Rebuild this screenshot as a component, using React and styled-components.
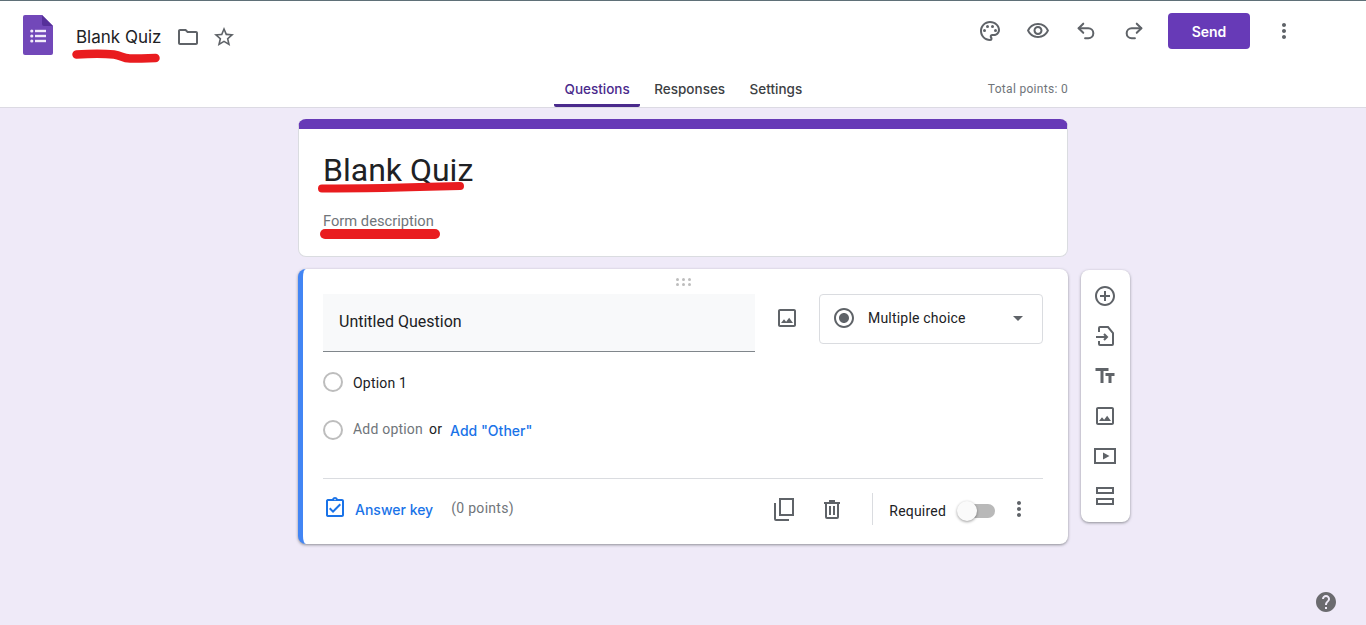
import styled, { createGlobalStyle } from "styled-components";
import {
  MdOutlineFolder,
  MdStarBorder,
  MdOutlinePalette,
  MdOutlineVisibility,
  MdMoreVert,
  MdOutlineImage,
  MdRadioButtonChecked,
  MdArrowDropDown,
  MdOutlineAssignmentTurnedIn,
  MdAddCircleOutline,
  MdTextFields,
  MdHelp,
} from "react-icons/md";
import { Undo2, Redo2 } from "lucide-react";

const GlobalStyle = createGlobalStyle`
  html, body {
    margin: 0;
    padding: 0;
    background: #efeaf8;
    font-family: Roboto, "Liberation Sans", sans-serif;
    color: #202124;
  }
  body {
    min-height: 625px;
    overflow: hidden;
  }
`;

const Header = styled.header`
  position: relative;
  height: 106px;
  background: #fff;
  border-top: 1px solid #5f7078;
  border-bottom: 1px solid #dcdae3;
`;

const TopRow = styled.div`
  display: flex;
  justify-content: space-between;
  height: 72px;
  padding: 0 58px 0 23px;
`;

const TitleGroup = styled.div`
  display: flex;
  align-items: center;
`;

const LogoMark = styled.svg`
  margin-top: -4px;
`;

const DocTitle = styled.span`
  margin-left: 23px;
  font-family: Inter, Roboto, sans-serif;
  font-size: 17px;
`;

const TitleIcons = styled.div`
  display: flex;
  align-items: center;
  gap: 12px;
  margin-left: 14px;
  color: #5f6368;
  font-size: 24px;
`;

const Actions = styled.div`
  display: flex;
  align-items: center;
  height: 60px;
  color: #5f6368;
`;

const ActionButton = styled.div`
  display: flex;
  align-items: center;
  justify-content: center;
  width: 48px;
  height: 48px;
`;

const SendButton = styled.button`
  width: 82px;
  height: 36px;
  margin: 0 10px;
  border: none;
  border-radius: 4px;
  background: #673ab7;
  color: #fff;
  font-family: Inter, Roboto, sans-serif;
  font-size: 14px;
  font-weight: 600;
`;

const TabRow = styled.div`
  display: flex;
  align-items: center;
  justify-content: space-between;
  width: 770px;
  height: 34px;
  margin: 0 auto;
  padding-left: 256px;
  box-sizing: border-box;
`;

const Tabs = styled.nav`
  display: flex;
  gap: 3.5px;
  height: 100%;
`;

const Tab = styled.div`
  display: flex;
  align-items: center;
  padding: 0 10.5px;
  font-family: Inter, Roboto, sans-serif;
  font-size: 13.5px;
  font-weight: 500;
  color: ${({ $active }) => ($active ? "#4a2a8c" : "#3c4043")};
  border-bottom: 3px solid ${({ $active }) => ($active ? "#4a2a8c" : "transparent")};
  border-radius: 0 0 2px 2px;
  box-sizing: border-box;
`;

const TotalPoints = styled.span`
  margin-bottom: 3px;
  font-size: 12px;
  letter-spacing: 0.3px;
  color: #70757a;
`;

const Main = styled.main`
  display: grid;
  grid-template-columns: 1fr 770px 1fr;
  row-gap: 12px;
  padding-top: 11px;
`;

const TitleCard = styled.section`
  grid-column: 2;
  position: relative;
  height: 138px;
  padding: 33px 25px 0;
  box-sizing: border-box;
  background: #fff;
  border: 1px solid #dadce0;
  border-top: 10px solid #673ab7;
  border-radius: 8px;
`;

const QuizTitle = styled.h1`
  margin: -12px 0 0 -1px;
  font-size: 32px;
  font-weight: 400;
  line-height: 40px;
`;

const Description = styled.p`
  margin: 22px 0 0 -1px;
  font-size: 14.7px;
  line-height: 18px;
  color: #70757a;
`;

const QuestionCard = styled.section`
  grid-column: 2;
  display: flex;
  flex-direction: column;
  height: 275px;
  padding: 0 25px 0 20px;
  box-sizing: border-box;
  background: #fff;
  border-left: 5px solid #4285f4;
  border-radius: 8px;
  box-shadow: 0 1px 3px rgba(60, 64, 67, 0.55);
`;

const DragHandle = styled.div`
  display: grid;
  grid-template-columns: repeat(3, 3px);
  grid-auto-rows: 3px;
  column-gap: 3px;
  row-gap: 2px;
  justify-content: center;
  align-content: start;
  height: 25px;
  padding-top: 9px;
  box-sizing: border-box;
`;

const Dot = styled.i`
  width: 3px;
  height: 3px;
  border-radius: 50%;
  background: #bdbdbd;
`;

const QuestionRow = styled.div`
  display: flex;
  align-items: flex-start;
  margin-bottom: 6px;
`;

const QuestionInput = styled.div`
  display: flex;
  align-items: center;
  width: 432px;
  height: 58px;
  padding: 0 0 2px 16px;
  box-sizing: border-box;
  background: #f8f9fa;
  border-bottom: 1px solid #80868b;
  font-size: 16px;
`;

const ImageButton = styled.div`
  display: flex;
  align-items: center;
  justify-content: center;
  width: 64px;
  height: 48px;
  color: #5f6368;
  font-size: 24px;
`;

const TypeSelect = styled.div`
  display: flex;
  align-items: center;
  width: 224px;
  height: 50px;
  padding: 0 12px 2px;
  box-sizing: border-box;
  border: 1px solid #dadce0;
  border-radius: 4px;
  font-size: 14px;
  color: #5f6368;
`;

const TypeLabel = styled.span`
  flex: 1;
  margin-left: 12px;
  letter-spacing: 0.2px;
  color: #202124;
`;

const OptionRow = styled.div`
  display: flex;
  align-items: center;
  height: 48px;
  font-size: 14px;
  letter-spacing: 0.2px;
`;

const Radio = styled.span`
  width: 20px;
  height: 20px;
  margin-right: 10px;
  box-sizing: border-box;
  border: 2px solid #bdbdbd;
  border-radius: 50%;
`;

const OptionLabel = styled.span`
  margin-top: 2px;
`;

const AddOption = styled.span`
  margin-bottom: 2px;
  color: #70757a;
`;

const OrText = styled.span`
  margin: 0 8px 2px 6px;
`;

const LinkText = styled.span`
  font-family: Inter, Roboto, sans-serif;
  font-size: 14px;
  font-weight: 500;
  letter-spacing: 0;
  color: #1a73e8;
`;

const Footer = styled.div`
  display: flex;
  align-items: center;
  margin-top: 24px;
  height: 61px;
  box-sizing: border-box;
  border-top: 1px solid #dadce0;
`;

const AnswerKey = styled.div`
  display: flex;
  align-items: center;
  gap: 8px;
  color: #1a73e8;
  font-size: 24px;
  svg {
    margin-bottom: 2px;
  }
`;

const Points = styled.span`
  margin: 0 0 2px 18px;
  font-size: 14px;
  letter-spacing: 0.3px;
  color: #70757a;
`;

const FooterTools = styled.div`
  display: flex;
  align-items: center;
  margin-left: auto;
  color: #5f6368;
`;

const TrashSvg = styled.svg`
  margin-left: 30px;
`;

const VDivider = styled.span`
  width: 1px;
  height: 32px;
  margin-left: 32px;
  background: #dadce0;
`;

const RequiredLabel = styled.span`
  margin: 4px 0 0 16px;
  font-size: 14px;
  letter-spacing: 0.2px;
  color: #202124;
`;

const Toggle = styled.span`
  position: relative;
  display: block;
  width: 34px;
  height: 14px;
  margin: 4px 0 0 15px;
  border-radius: 7px;
  background: #b9b9b9;
`;

const Knob = styled.span`
  position: absolute;
  left: -4px;
  top: -3px;
  width: 20px;
  height: 20px;
  border-radius: 50%;
  background: #fafafa;
  box-shadow: 0 1px 3px rgba(0, 0, 0, 0.4);
`;

const MoreButton = styled.div`
  display: flex;
  margin: 0 12px;
  font-size: 24px;
`;

const SideColumn = styled.div`
  grid-column: 3;
  padding-left: 13px;
`;

const SideToolbar = styled.aside`
  display: flex;
  flex-direction: column;
  width: 49px;
  padding: 6px 1px 6px 0;
  margin-top: 1px;
  box-sizing: border-box;
  background: #fff;
  border-radius: 8px;
  box-shadow: 0 1px 3px rgba(60, 64, 67, 0.55);
`;

const SideButton = styled.div`
  display: flex;
  align-items: center;
  justify-content: center;
  height: 40px;
  color: #5f6368;
  font-size: 24px;
`;

const HelpButton = styled.div`
  position: fixed;
  right: 28px;
  bottom: 11px;
  display: flex;
  color: #6b6b6f;
  font-size: 24px;
`;

const Scribble = styled.svg`
  position: absolute;
  left: ${({ $x }) => $x}px;
  top: ${({ $y }) => $y}px;
  pointer-events: none;
`;

const RedLine = ({ x, y, w, h, d, sw }) => (
  <Scribble $x={x} $y={y} width={w} height={h} viewBox={`0 0 ${w} ${h}`}>
    <path d={d} fill="none" stroke="#e91c1f" strokeWidth={sw} strokeLinecap="round" strokeLinejoin="round" />
  </Scribble>
);

const FormsLogo = () => (
  <LogoMark width="30" height="40" viewBox="0 0 30 40">
    <path d="M2 0h17l11 11v27a2 2 0 0 1-2 2H2a2 2 0 0 1-2-2V2a2 2 0 0 1 2-2z" fill="#7248b9" />
    <path d="M19 0l11 11H21a2 2 0 0 1-2-2z" fill="#56309a" />
    <g fill="#f1ebfa">
      <circle cx="8.8" cy="16" r="1.6" />
      <circle cx="8.8" cy="21" r="1.6" />
      <circle cx="8.8" cy="26" r="1.6" />
      <rect x="12" y="14.8" width="11" height="2.4" />
      <rect x="12" y="19.8" width="11" height="2.4" />
      <rect x="12" y="24.8" width="11" height="2.4" />
    </g>
  </LogoMark>
);

const ImportIcon = () => (
  <svg width="24" height="24" viewBox="0 0 24 24" fill="none" stroke="currentColor" strokeWidth="2">
    <path d="M6 8V4a1 1 0 0 1 1-1h8l5 6v11a1 1 0 0 1-1 1H7a1 1 0 0 1-1-1v-3" />
    <path d="M3 13h11M11 10l3 3-3 3" />
  </svg>
);

const VideoIcon = () => (
  <svg width="24" height="24" viewBox="0 0 24 24" fill="none" stroke="currentColor" strokeWidth="2">
    <rect x="2" y="5" width="20" height="14" />
    <path d="M10 8.5L16.5 12L10 15.5z" fill="currentColor" stroke="none" />
  </svg>
);

const SectionIcon = () => (
  <svg width="24" height="24" viewBox="0 0 24 24" fill="none" stroke="currentColor" strokeWidth="2">
    <rect x="4" y="4" width="16" height="5" />
    <rect x="4" y="15" width="16" height="5" />
  </svg>
);

const CopyIcon = () => (
  <svg width="20" height="23" viewBox="0 0 20 23" fill="none" stroke="currentColor" strokeWidth="2">
    <rect x="6" y="1" width="13" height="16" />
    <path d="M1 5V21a1 1 0 0 0 1 1H15" />
  </svg>
);

const TrashIcon = () => (
  <TrashSvg width="16" height="19" viewBox="0 0 16 19" fill="none" stroke="currentColor" strokeWidth="2">
    <path d="M0 3h16M5 1h6" />
    <path d="M2 3v14a1 1 0 0 0 1 1h10a1 1 0 0 0 1-1V3" />
    <path d="M6 6v9M10 6v9" />
  </TrashSvg>
);

export default function App() {
  return (
    <>
      <GlobalStyle />
      <Header>
        <TopRow>
          <TitleGroup>
            <FormsLogo />
            <DocTitle>Blank Quiz</DocTitle>
            <TitleIcons>
              <MdOutlineFolder />
              <MdStarBorder />
            </TitleIcons>
          </TitleGroup>
          <Actions>
            <ActionButton><MdOutlinePalette size={24} /></ActionButton>
            <ActionButton><MdOutlineVisibility size={24} /></ActionButton>
            <ActionButton><Undo2 size={22} strokeWidth={2.2} /></ActionButton>
            <ActionButton><Redo2 size={22} strokeWidth={2.2} /></ActionButton>
            <SendButton>Send</SendButton>
            <ActionButton><MdMoreVert size={24} /></ActionButton>
          </Actions>
        </TopRow>
        <TabRow>
          <Tabs>
            <Tab $active>Questions</Tab>
            <Tab>Responses</Tab>
            <Tab>Settings</Tab>
          </Tabs>
          <TotalPoints>Total points: 0</TotalPoints>
        </TabRow>
        <RedLine x={70} y={46} w={94} h={20} sw={8.5} d="M6.5 7.5C20 6.5 35 6.5 44 7.5C52 8.5 52 11.5 60 11.5C70 12 80 11 85.5 11" />
      </Header>
      <Main>
        <TitleCard>
          <QuizTitle>Blank Quiz</QuizTitle>
          <Description>Form description</Description>
          <RedLine x={17} y={48} w={155} h={20} sw={8} d="M6 11.5C50 11.5 110 10 144 9" />
          <RedLine x={17} y={95} w={130} h={20} sw={10} d="M9 10C40 10 90 10 119 10" />
        </TitleCard>
        <QuestionCard>
          <DragHandle>
            {[0, 1, 2, 3, 4, 5].map((i) => (
              <Dot key={i} />
            ))}
          </DragHandle>
          <QuestionRow>
            <QuestionInput>Untitled Question</QuestionInput>
            <ImageButton><MdOutlineImage /></ImageButton>
            <TypeSelect>
              <MdRadioButtonChecked size={24} />
              <TypeLabel>Multiple choice</TypeLabel>
              <MdArrowDropDown size={24} />
            </TypeSelect>
          </QuestionRow>
          <OptionRow>
            <Radio />
            <OptionLabel>Option 1</OptionLabel>
          </OptionRow>
          <OptionRow>
            <Radio />
            <AddOption>Add option</AddOption>
            <OrText>or</OrText>
            <LinkText>Add "Other"</LinkText>
          </OptionRow>
          <Footer>
            <AnswerKey>
              <MdOutlineAssignmentTurnedIn />
              <LinkText>Answer key</LinkText>
            </AnswerKey>
            <Points>(0 points)</Points>
            <FooterTools>
              <CopyIcon />
              <TrashIcon />
              <VDivider />
              <RequiredLabel>Required</RequiredLabel>
              <Toggle><Knob /></Toggle>
              <MoreButton><MdMoreVert /></MoreButton>
            </FooterTools>
          </Footer>
        </QuestionCard>
        <SideColumn>
          <SideToolbar>
            <SideButton><MdAddCircleOutline /></SideButton>
            <SideButton><ImportIcon /></SideButton>
            <SideButton><MdTextFields /></SideButton>
            <SideButton><MdOutlineImage /></SideButton>
            <SideButton><VideoIcon /></SideButton>
            <SideButton><SectionIcon /></SideButton>
          </SideToolbar>
        </SideColumn>
      </Main>
      <HelpButton><MdHelp /></HelpButton>
    </>
  );
}
